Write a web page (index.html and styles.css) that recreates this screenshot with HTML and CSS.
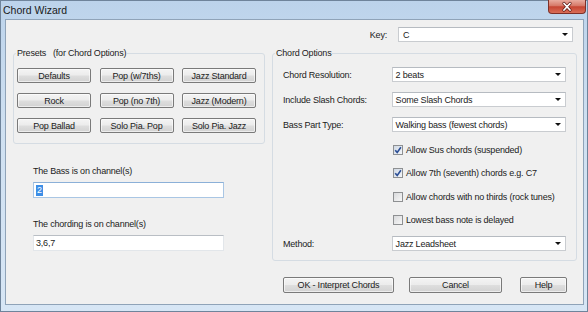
FILE: index.html
```html
<!DOCTYPE html>
<html lang="en">
<head>
    <meta charset="UTF-8">
    <title>Chord Wizard</title>
    <link rel="stylesheet" href="styles.css">
</head>
<body>
<div class="window">
    <div class="titlebar">
        <span class="title">Chord Wizard</span>
        <span class="close-btn">
            <svg width="36" height="12" viewBox="0 0 36 12">
                <path d="M15 2.5 L21 9 M21 2.5 L15 9" stroke="#5a1a14" stroke-width="3.2" stroke-linecap="round"/>
                <path d="M15 2.5 L21 9 M21 2.5 L15 9" stroke="#ffffff" stroke-width="1.8" stroke-linecap="round"/>
            </svg>
        </span>
    </div>

    <div class="client">
        <div class="key-row">
            <span class="key-label">Key:</span>
            <div class="combo key-combo"><span class="combo-text">C</span><span class="arrow"></span></div>
        </div>

        <div class="main">
            <div class="left-col">
                <div class="group presets">
                    <span class="group-title">Presets &nbsp; (for Chord Options)</span>
                    <div class="preset-grid">
                        <button class="btn">Defaults</button>
                        <button class="btn">Pop (w/7ths)</button>
                        <button class="btn">Jazz Standard</button>
                        <button class="btn">Rock</button>
                        <button class="btn">Pop (no 7th)</button>
                        <button class="btn">Jazz (Modern)</button>
                        <button class="btn">Pop Ballad</button>
                        <button class="btn">Solo Pia. Pop</button>
                        <button class="btn">Solo Pia. Jazz</button>
                    </div>
                </div>

                <div class="channel">
                    <label class="channel-label">The Bass is on channel(s)</label>
                    <div class="textbox focused"><span class="selected">2</span></div>
                </div>
                <div class="channel">
                    <label class="channel-label">The chording is on channel(s)</label>
                    <div class="textbox">3,6,7</div>
                </div>
            </div>

            <div class="right-col">
                <div class="group options">
                    <span class="group-title">Chord Options</span>

                    <div class="select-row">
                        <span class="row-label">Chord Resolution:</span>
                        <div class="combo"><span class="combo-text">2 beats</span><span class="arrow"></span></div>
                    </div>
                    <div class="select-row">
                        <span class="row-label">Include Slash Chords:</span>
                        <div class="combo"><span class="combo-text">Some Slash Chords</span><span class="arrow"></span></div>
                    </div>
                    <div class="select-row">
                        <span class="row-label">Bass Part Type:</span>
                        <div class="combo"><span class="combo-text">Walking bass (fewest chords)</span><span class="arrow"></span></div>
                    </div>

                    <div class="check-row">
                        <span class="checkbox checked">
                            <svg width="8" height="8" viewBox="0 0 8 8"><path d="M1.2 4.2 L3.2 6.4 L6.9 1.2" fill="none" stroke="#2c4f96" stroke-width="1.6"/></svg>
                        </span>
                        <span>Allow Sus chords (suspended)</span>
                    </div>
                    <div class="check-row">
                        <span class="checkbox checked">
                            <svg width="8" height="8" viewBox="0 0 8 8"><path d="M1.2 4.2 L3.2 6.4 L6.9 1.2" fill="none" stroke="#2c4f96" stroke-width="1.6"/></svg>
                        </span>
                        <span>Allow 7th (seventh) chords e.g. C7</span>
                    </div>
                    <div class="check-row">
                        <span class="checkbox"></span>
                        <span>Allow chords with no thirds (rock tunes)</span>
                    </div>
                    <div class="check-row">
                        <span class="checkbox"></span>
                        <span>Lowest bass note is delayed</span>
                    </div>

                    <div class="select-row">
                        <span class="row-label">Method:</span>
                        <div class="combo"><span class="combo-text">Jazz Leadsheet</span><span class="arrow"></span></div>
                    </div>
                </div>

                <div class="actions">
                    <button class="btn ok-btn">OK - Interpret Chords</button>
                    <button class="btn cancel-btn">Cancel</button>
                    <button class="btn help-btn">Help</button>
                </div>
            </div>
        </div>
    </div>
</div>
</body>
</html>
```

FILE: styles.css
```css
body {
    margin: 0;
    font-family: "Liberation Sans", Arial, sans-serif;
    font-size: 9px;
    letter-spacing: -0.2px;
    color: #1b1b1b;
    background: #ffffff;
}
.window {
    width: 588px;
    height: 312px;
    box-sizing: border-box;
    border: 1px solid #6f849b;
    background: linear-gradient(#bcd3eb, #cfe0f1 40%, #d7e6f5);
    display: flex;
    flex-direction: column;
}
.titlebar {
    height: 18px;
    display: flex;
    align-items: center;
    justify-content: space-between;
    padding-left: 2px;
}
.title {
    font-size: 10.5px;
    letter-spacing: 0;
    color: #1a1a1a;
    margin-top: -1px;
}
.close-btn {
    align-self: flex-start;
    margin-top: -1px;
    margin-right: 1px;
    width: 38px;
    height: 14px;
    box-sizing: border-box;
    border: 1px solid #7e3028;
    border-top: none;
    border-radius: 0 0 4px 4px;
    background: linear-gradient(#e9ac9f, #d67867 45%, #c64532 52%, #d96e58);
    display: flex;
    align-items: center;
    justify-content: center;
}
.client {
    flex: 1;
    margin: 0 3px 6px 4px;
    border: 1px solid #8fa3b8;
    background: #f0f0f0;
}
.key-row {
    margin-top: 7px;
    padding-right: 10px;
    display: flex;
    justify-content: flex-end;
    align-items: center;
    gap: 11px;
}
.combo {
    width: 175px;
    height: 15px;
    box-sizing: border-box;
    background: #ffffff;
    border: 1px solid #c9ccd0;
    border-top-color: #b6bbc1;
    display: flex;
    align-items: center;
}
.combo-text {
    flex: 1;
    padding-left: 3px;
}
.key-combo .combo-text {
    padding-left: 4px;
}
.arrow {
    width: 0;
    height: 0;
    border-left: 3px solid transparent;
    border-right: 3px solid transparent;
    border-top: 3px solid #111111;
    margin-right: 4px;
}
.main {
    margin-top: 11px;
    padding-left: 7px;
    display: flex;
    gap: 7px;
}
.left-col {
    width: 252px;
}
.right-col {
    width: 305px;
}
.group {
    position: relative;
    border: 1px solid #d5dce3;
    border-radius: 3px;
    box-sizing: border-box;
}
.group-title {
    position: absolute;
    top: -6px;
    left: 2px;
    padding: 0 1px;
    line-height: 11px;
    background: #f0f0f0;
    white-space: nowrap;
}
.presets {
    padding: 14px 0 10px 3px;
}
.preset-grid {
    display: grid;
    grid-template-columns: repeat(3, 74px);
    column-gap: 8.5px;
    row-gap: 10px;
}
.btn {
    height: 15px;
    padding: 0;
    margin: 0;
    font-family: "Liberation Sans", Arial, sans-serif;
    font-size: 9px;
    letter-spacing: -0.2px;
    color: #1b1b1b;
    border: 1px solid #7a7a7a;
    border-radius: 2px;
    background: linear-gradient(#f4f4f4, #ececec 48%, #dedede 52%, #d2d2d2);
    box-shadow: inset 0 0 0 1px rgba(255, 255, 255, 0.6);
}
.channel {
    padding-left: 20px;
    margin-top: 21px;
}
.presets + .channel {
    margin-top: 22px;
}
.channel-label {
    display: block;
    line-height: 11px;
    margin-bottom: 5px;
}
.textbox {
    width: 191px;
    height: 16px;
    box-sizing: border-box;
    background: #ffffff;
    border: 1px solid #e2e6ea;
    border-top-color: #b9bec4;
    padding-left: 2px;
    display: flex;
    align-items: center;
}
.textbox.focused {
    border-color: #a9c6e4;
    border-top-color: #8bb0d8;
}
.selected {
    background: #3d8ee6;
    color: #ffffff;
    padding: 0 1px;
    line-height: 11px;
}
.options {
    padding: 13px 10px 9px 10px;
    display: flex;
    flex-direction: column;
    gap: 8.5px;
}
.select-row {
    height: 15px;
    margin-bottom: 1.5px;
    display: flex;
    align-items: center;
}
.select-row:last-child {
    margin-bottom: 0;
}
.row-label {
    width: 109px;
}
.check-row {
    height: 15px;
    padding-left: 110px;
    display: flex;
    align-items: center;
    gap: 3px;
}
.checkbox {
    width: 10px;
    height: 10px;
    box-sizing: border-box;
    border: 1px solid #8e9092;
    background: linear-gradient(135deg, #d9dadc, #f7f7f7);
    display: flex;
    align-items: center;
    justify-content: center;
}
.checkbox.checked {
    background: linear-gradient(135deg, #cfd8e4, #f4f6f9);
}
.actions {
    margin-top: 16px;
    padding-left: 11px;
    display: flex;
}
.actions .btn {
    height: 16px;
}
.ok-btn {
    width: 111px;
}
.cancel-btn {
    width: 93px;
    margin-left: 15px;
}
.help-btn {
    width: 47px;
    margin-left: 18px;
}
```
